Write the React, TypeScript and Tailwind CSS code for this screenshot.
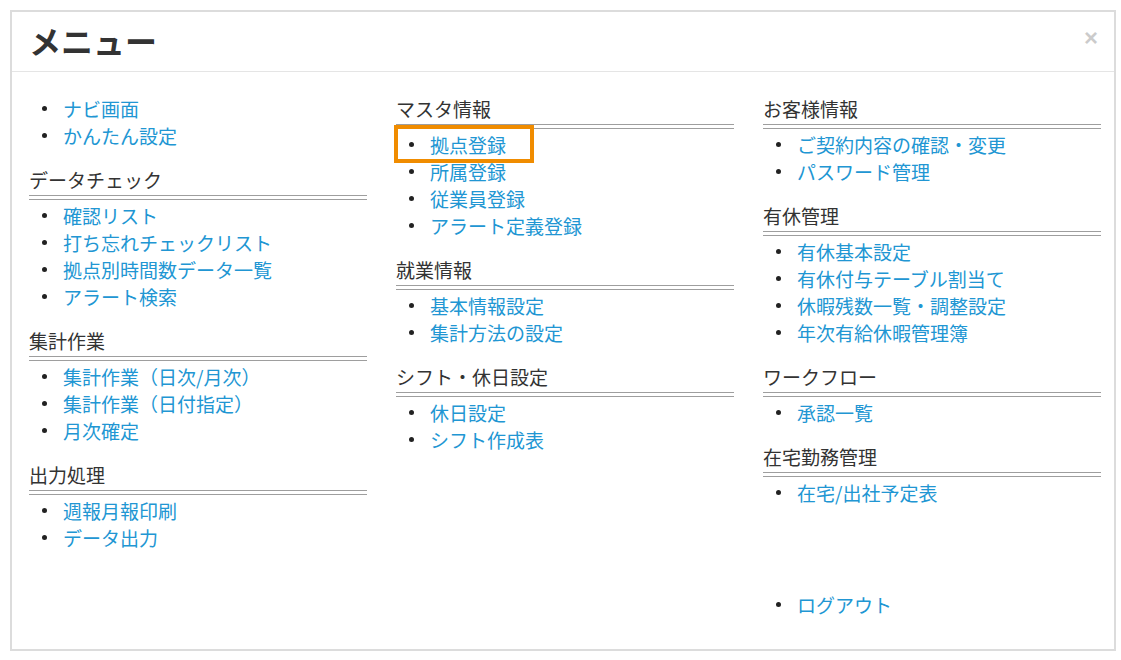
type Section = {
	title?: string;
	items: string[];
	spaced?: boolean;
};

const columns: Section[][] = [
	[
		{ items: ["ナビ画面", "かんたん設定"] },
		{
			title: "データチェック",
			items: ["確認リスト", "打ち忘れチェックリスト", "拠点別時間数データ一覧", "アラート検索"],
		},
		{
			title: "集計作業",
			items: ["集計作業（日次/月次）", "集計作業（日付指定）", "月次確定"],
		},
		{ title: "出力処理", items: ["週報月報印刷", "データ出力"] },
	],
	[
		{
			title: "マスタ情報",
			items: ["拠点登録", "所属登録", "従業員登録", "アラート定義登録"],
		},
		{ title: "就業情報", items: ["基本情報設定", "集計方法の設定"] },
		{ title: "シフト・休日設定", items: ["休日設定", "シフト作成表"] },
	],
	[
		{ title: "お客様情報", items: ["ご契約内容の確認・変更", "パスワード管理"] },
		{
			title: "有休管理",
			items: ["有休基本設定", "有休付与テーブル割当て", "休暇残数一覧・調整設定", "年次有給休暇管理簿"],
		},
		{ title: "ワークフロー", items: ["承認一覧"] },
		{ title: "在宅勤務管理", items: ["在宅/出社予定表"] },
		{ items: ["ログアウト"], spaced: true },
	],
];

const MenuItem = ({ label }: { label: string }) => (
	<li className="relative flex items-center h-[27px] leading-[27px]">
		<span className="ml-[13px] w-[5px] h-[5px] rounded-full bg-[#222] shrink-0" />
		<a href="#" className="ml-[16px] text-[#2196d3] whitespace-nowrap">
			{label}
		</a>
		{/* highlight frame around the selected item */}
		{label === "拠点登録" && (
			<span className="absolute left-[-2px] top-[-6px] w-[140px] h-[38px] border-4 border-[#f08c00]" />
		)}
	</li>
);

const MenuSection = ({ section, first }: { section: Section; first: boolean }) => (
	<div className={section.spaced ? "mt-[85px]" : first ? "" : "mt-[17px]"}>
		{section.title && (
			<>
				<div className="h-[27px] leading-[27px] text-[#333] whitespace-nowrap">
					{section.title}
				</div>
				<div className="mt-[2px] h-[5px] border-y border-[#9e9e9e]" />
			</>
		)}
		<ul className={section.title ? "mt-[2px]" : ""}>
			{section.items.map((item) => (
				<MenuItem key={item} label={item} />
			))}
		</ul>
	</div>
);

export default function App() {
	return (
		<div className="w-[1121px] h-[660px] bg-white pt-[10px] pl-[10px] font-['Noto_Sans_CJK_JP','Liberation_Sans',sans-serif] text-[19px]">
			<div className="w-[1106px] h-[641px] border-2 border-[#dcdcdc] bg-white">
				{/* Header */}
				<div className="h-[60px] border-b border-[#e5e5e5] flex items-center justify-between pl-[17px] pr-[16px]">
					<h2 className="text-[32px] font-bold leading-none text-[#333] pb-[4px]">メニュー</h2>
					<button className="font-['Liberation_Sans',sans-serif] text-[24px] font-bold leading-none text-black opacity-20 pb-[8px]">
						×
					</button>
				</div>

				{/* Body */}
				<div className="pt-[23px] pl-[17px] grid grid-cols-[338px_338px_338px] gap-x-[29px]">
					{columns.map((col, ci) => (
						<div key={ci}>
							{col.map((section, si) => (
								<MenuSection key={si} section={section} first={si === 0} />
							))}
						</div>
					))}
				</div>
			</div>
		</div>
	);
}
